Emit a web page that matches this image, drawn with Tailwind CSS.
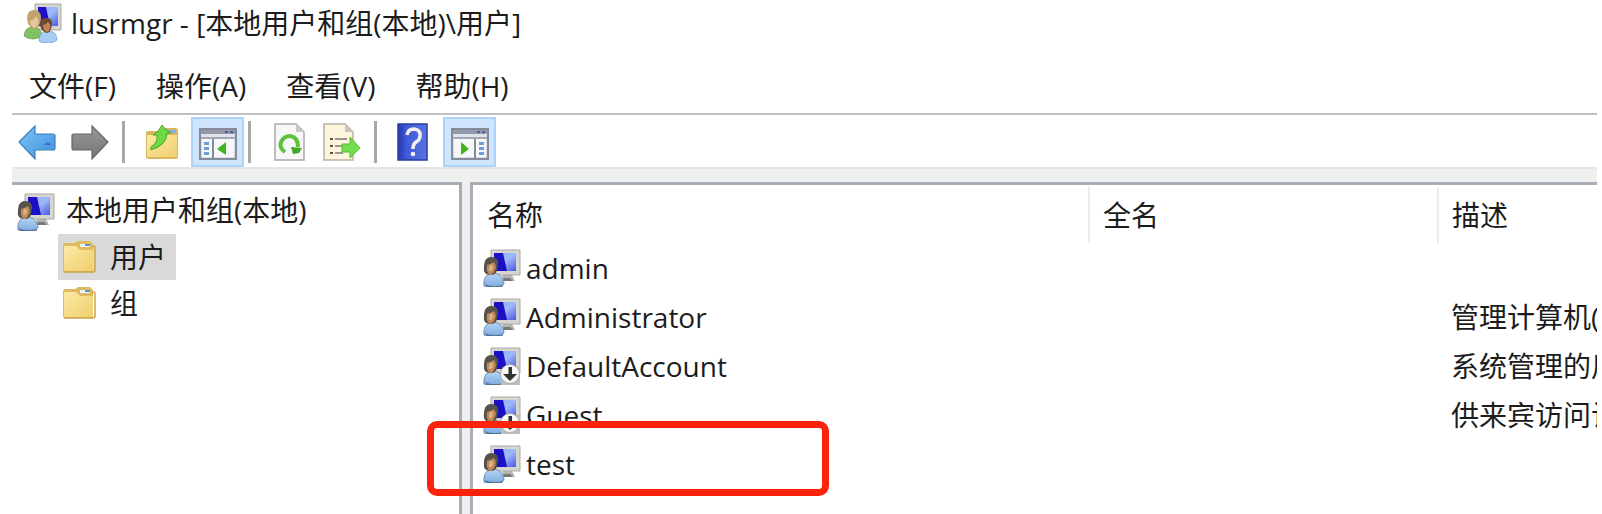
<!DOCTYPE html>
<html lang="zh-CN">
<head>
<meta charset="utf-8">
<title>lusrmgr</title>
<script src="https://cdn.jsdelivr.net/npm/@tailwindcss/browser@4"></script>
</head>
<body class="flex min-h-screen flex-col overflow-x-hidden bg-white pl-3 pr-[5px] font-['Open_Sans','Noto_Sans_CJK_SC',sans-serif] text-[28px] leading-9 text-[#1c1c1c]">
<svg class="absolute h-0 w-0" aria-hidden="true">
  <defs>
    <linearGradient id="screen" x1="0" y1="0" x2="1" y2="1"><stop offset="0" stop-color="#8fb0ff"/><stop offset=".5" stop-color="#9db9fb"/><stop offset="1" stop-color="#4a55e0"/></linearGradient>
    <linearGradient id="paper" x1="0" y1="0" x2="1" y2="1"><stop offset="0" stop-color="#fbe9a6"/><stop offset="1" stop-color="#f0cf6c"/></linearGradient>
    <linearGradient id="shirt" x1="0" y1="0" x2="0" y2="1"><stop offset="0" stop-color="#b5d6f7"/><stop offset="1" stop-color="#7fabdf"/></linearGradient>
    <linearGradient id="blue" x1="0" y1="0" x2="1" y2="1"><stop offset="0" stop-color="#7cc6f6"/><stop offset="1" stop-color="#3f8fdb"/></linearGradient>
    <linearGradient id="gray" x1="0" y1="0" x2="0" y2="1"><stop offset="0" stop-color="#999"/><stop offset="1" stop-color="#747474"/></linearGradient>
    <linearGradient id="help" x1="0" y1="0" x2="1" y2="0"><stop offset="0" stop-color="#2338ae"/><stop offset=".3" stop-color="#3f5bd8"/><stop offset="1" stop-color="#5672e2"/></linearGradient>
    <symbol id="monitor" viewBox="0 0 38 38">
      <path d="M20 26h9l3 6H18z" fill="#b4b4b2"/><path d="M21 29h6l3 3H20z" fill="#777"/>
      <path d="M8 1h29v25H8z" fill="#d6d5cf" stroke="#a9a9a5"/>
      <path d="M11 4h22v18H11z" fill="url(#screen)"/><path d="M11 4h9l4 18H11z" fill="#1c10c4"/>
    </symbol>
    <symbol id="user" viewBox="0 0 38 38">
      <use href="#monitor" width="38" height="38"/>
      <path d="M1 37C0 29 4 24 10 24s11 5 11 11q-3 3-11 3T1 37z" fill="url(#shirt)" stroke="#62809f" stroke-width=".8"/>
      <path d="M2 35q8 4 18 1v2H4z" fill="#34516f" opacity=".6"/>
      <path d="M1 22Q0 8 8 8t7 8l-1 5q-1 5-6 5-6 0-7-4z" fill="#57524a"/>
      <path d="M4 16q4-1 7-3 3 4 1 8-2 5-5 5-4-2-3-10z" fill="#bd8a58"/><path d="M7 16q3-1 3 2t-2 4-2-2z" fill="#dcb383"/>
    </symbol>
    <symbol id="disabled" viewBox="0 0 38 38">
      <use href="#user" width="38" height="38"/>
      <path d="M18 38V29l8-10h11v19z" fill="#bdbdbd"/>
      <circle cx="27" cy="27" r="9.500" fill="#f7f7f7" stroke="#aaa"/>
      <path d="M25.500 20h3.500v7h5l-7 7-7-7h5.500z" fill="#333"/>
    </symbol>
    <symbol id="group" viewBox="0 0 38 40">
      <path d="M11 1h26v26H11z" fill="#d6d5cf" stroke="#a9a9a5"/>
      <path d="M14 4h20v19H14z" fill="url(#screen)"/><path d="M14 4h8l4 19H14z" fill="#1c10c4"/>
      <path d="M0 33q1-9 9-9t9 9q-4 3-9 3t-9-3z" fill="#82c162" stroke="#5e9a42" stroke-width=".7"/>
      <path d="M3 16q0-9 7-9t7 8-6 11q-7-1-8-10z" fill="#c2a469"/><path d="M6 18q4-1 6-5 3 3 2 7t-4 5q-4-2-4-7z" fill="#e6c79b"/>
      <path d="M15 38q0-10 9-10t9 9q-3 3-9 3t-9-2z" fill="#a8cdf2" stroke="#6c9cd0" stroke-width=".7"/>
      <path d="M16 21q0-7 7-6 6 0 5 7t-5 8q-6-1-7-9z" fill="#6b4a30"/><path d="M19 22q3 0 5-3 3 2 2 6t-3 4q-4-1-4-7z" fill="#bd8456"/>
    </symbol>
    <symbol id="folder" viewBox="0 0 34 32">
      <path d="M1 4q0-2 2-2h10l3-2h12l3 3v26q0 2-2 2H3q-2 0-2-2z" fill="#dfbb60"/>
      <path d="M18 3h10v3H18z" fill="#eef5fb"/><path d="M23 3h5v2h-5z" fill="#5793d8"/>
      <path d="M2 5h12l4 4h13v21H3L2 29z" fill="url(#paper)"/>
      <path d="M30 5h2q1 0 1 2v22q0 2-2 2H2" fill="none" stroke="#c9a448" stroke-width="1.500"/>
    </symbol>
    <symbol id="panel" viewBox="0 0 38 32">
      <path d="M1 1h36v30H1z" fill="#f6f7f8" stroke="#858b9a" stroke-width="2.500"/>
      <path d="M2 2h34v4H2z" fill="#949aaa"/><path d="M26 3h3v2h-3zm5 0h3v2h-3z" fill="#4a5f91"/>
      <path d="M2 6h34v3H2z" fill="#dfe2e8"/><path d="M2 9h34v2H2z" fill="#a3a8b4"/>
    </symbol>
  </defs>
</svg>

<header class="flex h-[46px] items-center gap-[9px] pl-3">
  <svg class="h-10 w-[38px] shrink-0"><use href="#group"/></svg>
  <h1 class="whitespace-nowrap">lusrmgr - [本地用户和组(本地)\用户]</h1>
</header>

<nav class="flex h-[67px] items-center gap-10 pl-[17px] pt-3">
  <button class="whitespace-nowrap">文件(F)</button>
  <button class="whitespace-nowrap">操作(A)</button>
  <button class="whitespace-nowrap">查看(V)</button>
  <button class="whitespace-nowrap">帮助(H)</button>
</nav>

<div class="flex h-[54px] items-center border-t-2 border-[#bfc0c3] pt-[2px]" role="toolbar">
  <button class="ml-[5px] p-px" aria-label="后退"><svg class="h-9 w-[38px]" viewBox="0 0 38 36"><path d="M1 18 17 2v8h18q2 0 2 2v12q0 2-2 2H17v9z" fill="url(#blue)" stroke="#3d80bd" stroke-width="1.200"/><path d="M26 21q4-5 7 0z" fill="#4b5fd8"/></svg></button>
  <button class="ml-[13px] p-px" aria-label="前进"><svg class="h-9 w-[38px]" viewBox="0 0 38 36"><path d="M37 18 21 2v8H3q-2 0-2 2v12q0 2 2 2h18v9z" fill="url(#gray)" stroke="#666" stroke-width="1.200"/></svg></button>
  <span class="ml-3 h-[42px] w-[3px] bg-[#a8a8a8]"></span>
  <button class="ml-5" aria-label="上移一级"><svg class="h-9 w-[34px]" viewBox="0 0 34 36"><path d="M1 9q0-2 2-2h10l3-3h14q3 0 3 3v26q0 2-2 2H3q-2 0-2-2z" fill="#d9b65a"/><path d="M22 6h9v3h-9z" fill="#7fb0e6"/><path d="M2 11h30v22H2z" fill="url(#paper)"/><path d="M6 23q7-4 6-12H8q6-3 9-10 4 6 9 8h-4q0 12-16 17z" fill="#6ed944" stroke="#47a528"/></svg></button>
  <button class="ml-3 flex h-[50px] w-[53px] items-center justify-center border-2 border-[#add3fb] bg-[#cfe5fd] pt-1" aria-label="显示/隐藏控制台树" aria-pressed="true"><svg class="h-8 w-[38px]" viewBox="0 0 38 32"><use href="#panel"/><path d="M13 11h2v19h-2z" fill="#858b9a"/><path d="M5 14h5v3H5zm0 5h5v3H5zm0 5h5v3H5z" fill="#6f9cd2"/><path d="M27 14v13l-9-6z" fill="#40b51d"/></svg></button>
  <span class="ml-1 h-[42px] w-[3px] bg-[#a8a8a8]"></span>
  <button class="ml-[23px]" aria-label="刷新"><svg class="h-[38px] w-[31px]" viewBox="0 0 31 38"><path d="M1 1h21l8 8v28H1z" fill="#f7f7f7" stroke="#a9a9a9" stroke-width="1.500"/><path d="M22 1v8h8z" fill="#c7c7c7"/><path d="M11 29q-6-4-4-10 3-6 9-6 8 1 8 11" fill="none" stroke="#5dc13b" stroke-width="4"/><path d="M17 24l11 1-3 5-6 1z" fill="#43a827"/></svg></button>
  <button class="ml-[18px]" aria-label="导出列表"><svg class="h-[38px] w-[38px]" viewBox="0 0 38 38"><path d="M1 1h21l8 8v28H1z" fill="#fdf5dc" stroke="#b8b2a0" stroke-width="1.500"/><path d="M22 1v8h8z" fill="#c9c5ba"/><path d="M7 15h3v2H7zm0 7h3v2H7zm0 7h3v2H7z" fill="#555"/><path d="M12 15h12v2H12zm0 7h8v2h-8zm0 7h8v2h-8z" fill="#9b948e"/><path d="M19 21h8v-7l10 11-10 10v-6h-8z" fill="#74dc4f" stroke="#58ba38"/></svg></button>
  <span class="ml-[13px] h-[42px] w-[3px] bg-[#a8a8a8]"></span>
  <button class="ml-5" aria-label="帮助"><svg class="h-[38px] w-[31px]" viewBox="0 0 31 38"><path d="M1 1h29v36H1z" fill="url(#help)" stroke="#2c3d9b" stroke-width="1.500"/><path d="M10 12q1-6 7-6 7 1 6 7 0 4-4 6-3 2-3 7" fill="none" stroke="#f3edf4" stroke-width="3.500"/><circle cx="16" cy="31" r="2.300" fill="#f3edf4"/></svg></button>
  <button class="ml-[15px] flex h-[50px] w-[53px] items-center justify-center border-2 border-[#add3fb] bg-[#cfe5fd] pt-1" aria-label="显示/隐藏操作窗格" aria-pressed="true"><svg class="h-8 w-[38px]" viewBox="0 0 38 32"><use href="#panel"/><path d="M23 11h2v19h-2z" fill="#858b9a"/><path d="M28 14h5v3h-5zm0 5h5v3h-5zm0 5h5v3h-5z" fill="#6f9cd2"/><path d="M10 14v13l8-6z" fill="#40b51d"/></svg></button>
</div>

<main class="relative flex grow gap-2 border-t-2 border-[#e4e5e5] bg-[#eef0f0] pt-[13px]">
  <aside class="w-[450px] shrink-0 border-r-3 border-t-3 border-[#abadb6] bg-white pl-[5px]">
    <div class="flex h-[49px] items-center gap-[11px] pb-1 pt-1">
      <svg class="mt-1 h-[38px] w-[38px] shrink-0"><use href="#user"/></svg>
      <span class="whitespace-nowrap">本地用户和组(本地)</span>
    </div>
    <ul class="ml-[41px]">
      <li class="flex h-[46px] w-[118px] items-center gap-[14px] bg-[#d9d9d9] pl-1"><svg class="h-8 w-[34px] shrink-0"><use href="#folder"/></svg><span>用户</span></li>
      <li class="flex h-[46px] w-[118px] items-center gap-[14px] pl-1"><svg class="h-8 w-[34px] shrink-0"><use href="#folder"/></svg><span>组</span></li>
    </ul>
  </aside>
  <section class="min-w-0 grow overflow-hidden border-l-3 border-t-3 border-[#abadb6] bg-white pt-[2px]">
    <table class="w-full table-fixed whitespace-nowrap text-left">
      <colgroup><col class="w-[616px]"><col class="w-[349px]"><col></colgroup>
      <thead>
        <tr class="h-14">
          <th class="border-r-2 border-[#ececec] pl-[14px] font-normal">名称</th>
          <th class="border-r-2 border-[#ececec] pl-[13px] font-normal">全名</th>
          <th class="pl-[13px] font-normal">描述</th>
        </tr>
      </thead>
      <tbody>
        <tr class="h-[49px]"><td class="pl-[10px]"><div class="flex items-center gap-[5px]"><svg class="h-[38px] w-[38px]"><use href="#user"/></svg>admin</div></td><td></td><td></td></tr>
        <tr class="h-[49px]"><td class="pl-[10px]"><div class="flex items-center gap-[5px]"><svg class="h-[38px] w-[38px]"><use href="#user"/></svg>Administrator</div></td><td></td><td class="overflow-hidden pl-[13px]">管理计算机(</td></tr>
        <tr class="h-[49px]"><td class="pl-[10px]"><div class="flex items-center gap-[5px]"><svg class="h-[38px] w-[38px]"><use href="#disabled"/></svg>DefaultAccount</div></td><td></td><td class="overflow-hidden pl-[13px]">系统管理的用</td></tr>
        <tr class="h-[49px]"><td class="pl-[10px]"><div class="flex items-center gap-[5px]"><svg class="h-[38px] w-[38px]"><use href="#disabled"/></svg>Guest</div></td><td></td><td class="overflow-hidden pl-[13px]">供来宾访问计</td></tr>
        <tr class="h-[49px]"><td class="pl-[10px]"><div class="flex items-center gap-[5px]"><svg class="h-[38px] w-[38px]"><use href="#user"/></svg>test</div></td><td></td><td></td></tr>
      </tbody>
    </table>
  </section>
  <div class="pointer-events-none absolute left-[415px] top-[252px] h-[75px] w-[402px] rounded-[10px] border-[7px] border-[#fb230b]"></div>
</main>
</body>
</html>
